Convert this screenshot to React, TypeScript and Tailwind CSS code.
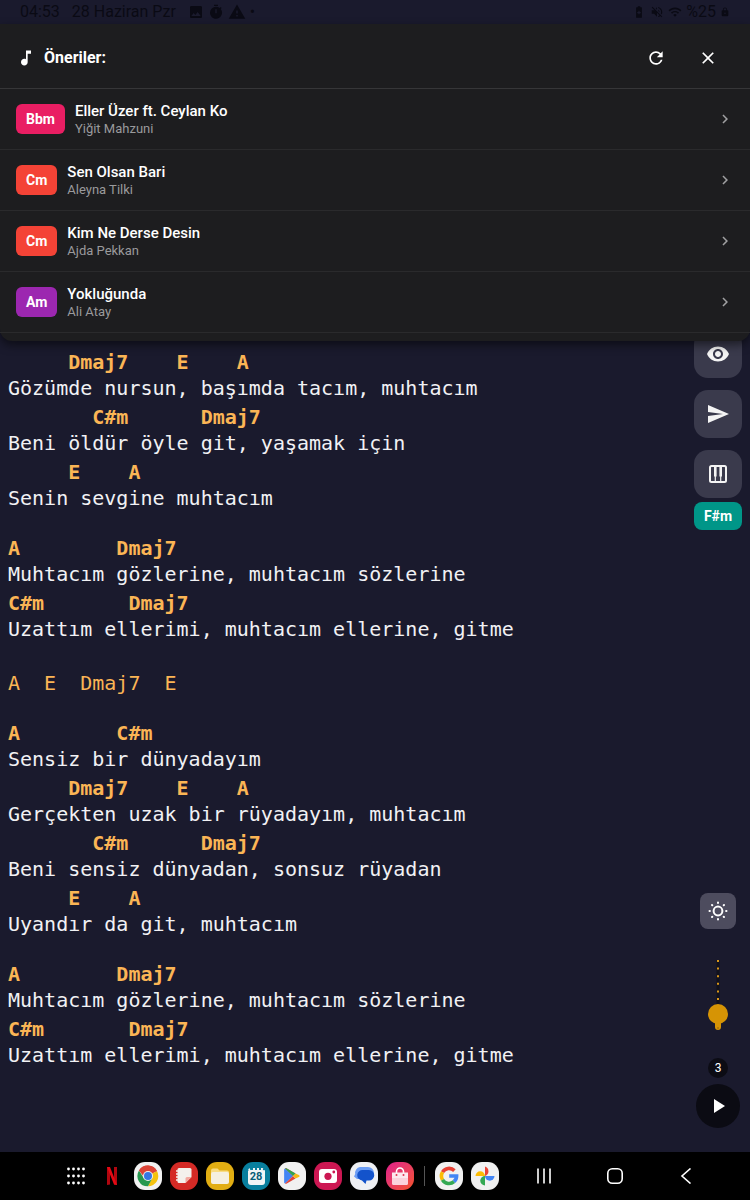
import React from 'react';
import {
  MdMusicNote,
  MdRefresh,
  MdClose,
  MdChevronRight,
  MdRemoveRedEye,
  MdSend,
  MdPlayArrow,
  MdImage,
  MdTimer,
  MdWarning,
  MdVolumeOff,
  MdWifi,
  MdBatterySaver,
  MdLock,
} from 'react-icons/md';

interface Suggestion {
  chord: string;
  color: string;
  title: string;
  artist: string;
}

const suggestions: Suggestion[] = [
  { chord: 'Bbm', color: 'bg-[#e91e63]', title: 'Eller Üzer ft. Ceylan Ko', artist: 'Yiğit Mahzuni' },
  { chord: 'Cm', color: 'bg-[#f44336]', title: 'Sen Olsan Bari', artist: 'Aleyna Tilki' },
  { chord: 'Cm', color: 'bg-[#f44336]', title: 'Kim Ne Derse Desin', artist: 'Ajda Pekkan' },
  { chord: 'Am', color: 'bg-[#9c27b0]', title: 'Yokluğunda', artist: 'Ali Atay' },
];

interface Line {
  chords: string;
  lyric: string;
}

const verse1: Line[] = [
  { chords: '     Dmaj7    E    A', lyric: 'Gözümde nursun, başımda tacım, muhtacım' },
  { chords: '       C#m      Dmaj7', lyric: 'Beni öldür öyle git, yaşamak için' },
  { chords: '     E    A', lyric: 'Senin sevgine muhtacım' },
];

const chorus: Line[] = [
  { chords: 'A        Dmaj7', lyric: 'Muhtacım gözlerine, muhtacım sözlerine' },
  { chords: 'C#m       Dmaj7', lyric: 'Uzattım ellerimi, muhtacım ellerine, gitme' },
];

const verse2: Line[] = [
  { chords: 'A        C#m', lyric: 'Sensiz bir dünyadayım' },
  { chords: '     Dmaj7    E    A', lyric: 'Gerçekten uzak bir rüyadayım, muhtacım' },
  { chords: '       C#m      Dmaj7', lyric: 'Beni sensiz dünyadan, sonsuz rüyadan' },
  { chords: '     E    A', lyric: 'Uyandır da git, muhtacım' },
];

const StatusBar: React.FC = () => (
  <div className="flex h-6 items-center justify-between px-5 text-base text-[#0a0a14]">
    <div className="flex items-center gap-3">
      <span>04:53</span>
      <span>28 Haziran Pzr</span>
      <div className="flex items-center gap-1">
        <MdImage size={16} />
        <MdTimer size={16} />
        <MdWarning size={18} />
        <span>•</span>
      </div>
    </div>
    <div className="flex items-center gap-1">
      <MdBatterySaver size={14} />
      <MdVolumeOff size={14} />
      <MdWifi size={14} />
      <span>%25</span>
      <MdLock size={10} />
    </div>
  </div>
);

const Suggestions: React.FC = () => (
  <section className="relative z-10 rounded-b-xl bg-[#1d1d1f] pb-2 shadow-[0_4px_10px_rgba(0,0,0,0.5)]">
    <header className="flex h-[65px] items-center border-b border-[#363638] pt-1 pr-[18px] pl-4">
      <MdMusicNote size={20} />
      <h1 className="ml-2 flex-1 text-base font-bold">Öneriler:</h1>
      <button type="button" aria-label="Yenile" className="flex h-10 w-12 items-center justify-center">
        <MdRefresh size={20} />
      </button>
      <button type="button" aria-label="Kapat" className="ml-1 flex h-10 w-12 items-center justify-center">
        <MdClose size={20} />
      </button>
    </header>
    <ul>
      {suggestions.map((s) => (
        <li key={s.title} className="border-b border-[#2a2a2c]">
          <button type="button" className="flex h-15 w-full items-center gap-[10px] px-4 text-left">
            <span className={`${s.color} rounded-md px-[10px] text-sm leading-[30px] font-bold`}>{s.chord}</span>
            <span className="flex flex-1 flex-col pt-[2px]">
              <span className="text-[15px] leading-[18px] font-medium">{s.title}</span>
              <span className="text-[13px] leading-[18px] text-[#9a9a9c]">{s.artist}</span>
            </span>
            <MdChevronRight size={18} className="text-[#a0a0a2]" />
          </button>
        </li>
      ))}
    </ul>
  </section>
);

const Verse: React.FC<{ lines: Line[] }> = ({ lines }) => (
  <div className="flex flex-col gap-[3px]">
    {lines.map((line) => (
      <div key={line.lyric}>
        <pre className="font-['DejaVu_Sans_Mono',monospace] font-bold text-[#fbb555]">{line.chords}</pre>
        <p className="whitespace-pre">{line.lyric}</p>
      </div>
    ))}
  </div>
);

const SunIcon: React.FC = () => (
  <svg width="20" height="20" viewBox="0 0 20 20" fill="none" stroke="currentColor" strokeWidth="2" strokeLinecap="round">
    <circle cx="10" cy="10" r="4.4" />
    <path d="M10 1.5v.4M10 18.1v.4M1.5 10h.4M18.1 10h.4M4 4l.3.3M15.7 15.7l.3.3M4 16l.3-.3M15.7 4.300L16 4" />
  </svg>
);

const PianoIcon: React.FC = () => (
  <svg width="24" height="24" viewBox="0 0 24 24" fill="none" stroke="currentColor">
    <rect x="4" y="4" width="16" height="16" rx="1.500" strokeWidth="2" />
    <path d="M9.300 4v10.500M14.700 4v10.500" strokeWidth="2.600" />
    <path d="M9.300 14v6M14.700 14v6" strokeWidth="1.200" />
  </svg>
);

const SpeedSlider: React.FC = () => (
  <label className="relative block h-20 w-6">
    <svg width="24" height="80" viewBox="0 0 24 80" aria-hidden="true">
      <path d="M12 6v45" stroke="#11111c" strokeWidth="3" />
      <path d="M12 6v40" stroke="#d8951a" strokeWidth="2" strokeDasharray="2 5.6" />
      <path d="M12 60v13" stroke="#d69405" strokeWidth="6" strokeLinecap="round" />
      <circle cx="12" cy="60" r="10" fill="#d69405" />
      <circle cx="12" cy="74" r="1" fill="#a87408" />
    </svg>
    <input
      type="range"
      min="1"
      max="20"
      defaultValue="3"
      aria-label="Kaydırma hızı"
      className="absolute inset-0 h-full w-full opacity-0 [direction:rtl] [writing-mode:vertical-lr]"
    />
  </label>
);

const railButton = 'flex size-12 items-center justify-center rounded-[14px] bg-[#3a3a4c] text-[#f4f4f4]';

const SideRail: React.FC = () => (
  <aside className="-mt-[11px] flex w-12 flex-col items-center justify-between pb-6">
    <div className="flex flex-col gap-3">
      <button type="button" aria-label="Görünüm" className={railButton}>
        <MdRemoveRedEye size={24} />
      </button>
      <button type="button" aria-label="Gönder" className={railButton}>
        <MdSend size={24} />
      </button>
      <div className="flex flex-col gap-1">
        <button type="button" aria-label="Piyano" className={railButton}>
          <PianoIcon />
        </button>
        <span className="rounded-lg bg-[#009688] text-center text-sm leading-7 font-bold">F#m</span>
      </div>
    </div>
    <div className="flex flex-col items-center">
      <button type="button" aria-label="Parlaklık" className="flex size-9 items-center justify-center rounded-lg bg-[#4d4c5e]">
        <SunIcon />
      </button>
      <div className="mt-[25px]">
        <SpeedSlider />
      </div>
      <span className="mt-6 size-5 rounded-full bg-[#0c0c14] text-center text-xs leading-5">3</span>
      <button type="button" aria-label="Oynat" className="mt-[6px] flex size-11 items-center justify-center rounded-full bg-[#0b0b13]">
        <MdPlayArrow size={24} />
      </button>
    </div>
  </aside>
);

interface AppIconProps {
  label: string;
  bg: string;
  children: React.ReactNode;
}

const AppIcon: React.FC<AppIconProps> = ({ label, bg, children }) => (
  <button type="button" aria-label={label} className={`${bg} flex size-7 items-center justify-center rounded-[11px]`}>
    {children}
  </button>
);

const TaskBar: React.FC = () => (
  <footer className="flex h-12 items-center justify-between bg-black pr-[50px] pl-[62px]">
    <div className="flex items-center gap-2">
      <AppIcon label="Uygulamalar" bg="bg-black">
        <svg width="18" height="18" viewBox="0 0 18 18" fill="#fff">
          {[1.5, 6.5, 11.5, 16.5].map((x) =>
            [2, 9, 16].map((y) => <circle key={`${x}-${y}`} cx={x} cy={y} r="1.4" />),
          )}
        </svg>
      </AppIcon>
      <AppIcon label="Netflix" bg="bg-black">
        <svg width="10" height="18" viewBox="0 0 10 18">
          <path d="M0 0h3v17.5l-3 .5zM7 0h3v18l-3-.5z" fill="#b1060f" />
          <path d="M0 0h3l7 18-3-.5z" fill="#e50914" />
        </svg>
      </AppIcon>
      <AppIcon label="Chrome" bg="bg-[#f1f1f1]">
        <svg width="22" height="22" viewBox="0 0 22 22">
          <path d="M11 11L2 5.6A10.3 10.3 0 0 1 20 6z" fill="#dc4437" />
          <path d="M11 11L20 6a10.3 10.3 0 0 1-9 15.3l4-8z" fill="#f4c20d" />
          <path d="M11 11l4.2 2.4L11 21.3A10.3 10.3 0 0 1 2 5.6l5 7.8z" fill="#27984f" />
          <path d="M11 6.2h9.1A10.3 10.3 0 0 0 2 5.6l4.6 6z" fill="#dc4437" />
          <circle cx="11" cy="11" r="5" fill="#f1f1f1" />
          <circle cx="11" cy="11" r="4" fill="#3577e5" />
        </svg>
      </AppIcon>
      <AppIcon label="Notlar" bg="bg-[#d42a25]">
        <svg width="20" height="20" viewBox="0 0 20 20">
          <path d="M5 2h11a1.5 1.5 0 0 1 1.5 1.5V11L11.500 17H5a1.5 1.5 0 0 1-1.5-1.5v-12A1.5 1.5 0 0 1 5 2z" fill="#f4f1ec" />
          <path d="M11.500 17v-4.500A1.500 1.500 0 0 1 13 11h4.500z" fill="#f3a99f" />
          <path d="M2 5h3M2 8h3M2 11h3M2 14h3" stroke="#f4f1ec" strokeWidth="1.4" />
        </svg>
      </AppIcon>
      <AppIcon label="Dosyalarım" bg="bg-[#e2ae12]">
        <svg width="20" height="18" viewBox="0 0 20 18">
          <path d="M1 3.5A2 2 0 0 1 3 1.5h4.5l2 2H17a2 2 0 0 1 2 2V9H1z" fill="#f8dc83" />
          <rect x="1" y="5" width="18" height="12" rx="2" fill="#f5f0e0" />
        </svg>
      </AppIcon>
      <AppIcon label="Takvim" bg="bg-[#087f9e]">
        <span className="w-[17px] rounded-[3px] border-t-2 border-dotted border-[#087f9e] bg-[#f1f5f6] pb-px text-center text-[11px] leading-[14px] font-bold text-[#075d77]">
          28
        </span>
      </AppIcon>
      <AppIcon label="Play Store" bg="bg-[#f1f1f1]">
        <svg width="18" height="18" viewBox="0 0 18 18">
          <path d="M2 1.5L10 9l-8 7.5c-.6-.3-.9-.8-.9-1.5V3c0-.7.3-1.2.9-1.5z" fill="#4285f4" />
          <path d="M2 1.5c.6-.3 1.2-.2 1.8.1L12.5 6.5 10 9z" fill="#e0453a" />
          <path d="M2 1.5c.6-.3 1.2-.2 1.8.1L12.5 6.5 10 9z" fill="#2fa552" />
          <path d="M2 16.5L10 9l2.5 2.5-8.7 4.9c-.6.3-1.2.4-1.8.1z" fill="#e0453a" />
          <path d="M12.5 6.5l3.4 1.4c.9.5.9 1.7 0 2.2l-3.4 1.4L10 9z" fill="#f6b915" />
        </svg>
      </AppIcon>
      <AppIcon label="Kamera" bg="bg-[#cc1752]">
        <svg width="18" height="14" viewBox="0 0 18 14">
          <rect width="18" height="14" rx="3" fill="#fff" />
          <circle cx="9" cy="7.3" r="3.6" fill="#cc1752" />
          <circle cx="14.8" cy="3" r="1.4" fill="#cc1752" />
        </svg>
      </AppIcon>
      <AppIcon label="Mesajlar" bg="bg-[#eef0f4]">
        <svg width="22" height="20" viewBox="0 0 22 20">
          <path d="M7 1h8a6 6 0 0 1 0 12H4L1 10.5 2.2 8A6 6 0 0 1 7 1z" fill="#6b9df5" />
          <path d="M10 4h6a5.2 5.2 0 0 1 0 10.5h-2.500L12.5 18 9 14.500A5.2 5.2 0 0 1 10 4z" fill="#1353cb" />
        </svg>
      </AppIcon>
      <AppIcon label="Galaxy Store" bg="bg-linear-to-br from-[#e0198a] to-[#f4511e]">
        <svg width="18" height="19" viewBox="0 0 18 19">
          <path d="M5.5 7.5V4.5a3.5 3.5 0 0 1 7 0v3" fill="none" stroke="#fff" strokeWidth="1.6" />
          <path d="M1 5.5h16V16a2 2 0 0 1-2 2H3a2 2 0 0 1-2-2z" fill="#fce9ee" />
          <path d="M1 11h16v5a2 2 0 0 1-2 2H3a2 2 0 0 1-2-2z" fill="#fbd3dc" />
          <circle cx="5.5" cy="8" r="1" fill="#e0304f" />
          <circle cx="12.5" cy="8" r="1" fill="#e0304f" />
        </svg>
      </AppIcon>
      <span className="mx-[2px] h-5 w-px bg-[#555]" />
      <AppIcon label="Google" bg="bg-[#f1f1f1]">
        <svg width="20" height="20" viewBox="0 0 20 20" fill="none" strokeWidth="3.6">
          <path d="M3.5 6.2A7.6 7.6 0 0 1 15.4 4.6" stroke="#e94235" />
          <path d="M3.5 13.8a7.6 7.6 0 0 1 0-7.6" stroke="#fbbc04" />
          <path d="M15 15.7a7.6 7.6 0 0 1-11.5-1.9" stroke="#34a853" />
          <path d="M10.2 10h7.4a7.6 7.6 0 0 1-2.6 5.7" stroke="#4285f4" />
        </svg>
      </AppIcon>
      <AppIcon label="Fotoğraflar" bg="bg-[#f1f1f1]">
        <svg width="20" height="20" viewBox="0 0 20 20">
          <path d="M10 10V.5A5 5 0 0 1 10 10z" fill="#ea4335" />
          <path d="M10 10h9.500A4.750 4.750 0 0 1 10 10z" fill="#4285f4" />
          <path d="M10 10v9.500A4.750 4.750 0 0 1 10 10z" fill="#34a853" />
          <path d="M10 10H.5A4.750 4.750 0 0 1 10 10z" fill="#fbbc04" />
        </svg>
      </AppIcon>
    </div>
    <nav className="flex items-center gap-[43px] text-white">
      <button type="button" aria-label="Son uygulamalar" className="flex size-7 items-center justify-center">
        <svg width="16" height="16" viewBox="0 0 16 16" stroke="currentColor" strokeWidth="1.6">
          <path d="M2 .5v15M8 .5v15M14 .5v15" />
        </svg>
      </button>
      <button type="button" aria-label="Ana ekran" className="flex size-7 items-center justify-center">
        <svg width="16" height="16" viewBox="0 0 16 16" fill="none" stroke="currentColor" strokeWidth="1.6">
          <rect x=".8" y=".8" width="14.4" height="14.4" rx="4.5" />
        </svg>
      </button>
      <button type="button" aria-label="Geri" className="flex size-7 items-center justify-center">
        <svg width="16" height="16" viewBox="0 0 16 16" fill="none" stroke="currentColor" strokeWidth="1.6">
          <path d="M12.5 .5L4 8l8.5 7.5" />
        </svg>
      </button>
    </nav>
  </footer>
);

const App: React.FC = () => {
  return (
    <div className="flex min-h-screen flex-col bg-[#1a1a2d] font-[Roboto,sans-serif] text-white">
      <StatusBar />
      <Suggestions />
      <div className="flex flex-1 justify-between px-2">
        <main className="flex flex-col gap-6 pt-2 font-['DejaVu_Sans_Mono',monospace] text-xl leading-[26px] text-[#f1f1f4]">
          <Verse lines={verse1} />
          <Verse lines={chorus} />
          <pre className="pt-1 font-['DejaVu_Sans_Mono',monospace] text-[#fbb555]">{'A  E  Dmaj7  E'}</pre>
          <Verse lines={verse2} />
          <Verse lines={chorus} />
        </main>
        <SideRail />
      </div>
      <TaskBar />
    </div>
  );
};

export default App;
